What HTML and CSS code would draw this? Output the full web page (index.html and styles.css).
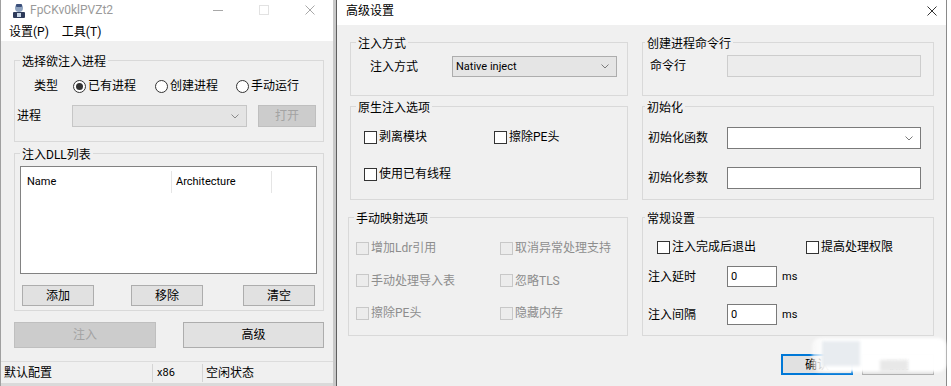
FILE: index.html
```html
<!DOCTYPE html>
<html lang="zh-CN">
<head>
<meta charset="utf-8">
<title>Injector</title>
<link rel="stylesheet" href="styles.css">
</head>
<body>
<div class="desktop">
  <div class="win-left">
    <div class="titlebar">
      <svg class="app-icon" width="14" height="15" viewBox="0 0 14 15">
        <rect x="1" y="9" width="12" height="6" rx="1" fill="#2d3a5a"/>
        <circle cx="7" cy="5" r="4" fill="#8fa3bf"/>
        <rect x="4" y="1" width="6" height="3" rx="1" fill="#3b4f7a"/>
        <rect x="5" y="10" width="4" height="4" fill="#c9d6e6"/>
      </svg>
      <span class="win-title lat12">FpCKv0klPVZt2</span>
      <div class="caption">
        <span class="cap-btn"><svg width="10" height="10" viewBox="0 0 10 10"><line x1="0" y1="5.5" x2="10" y2="5.5" stroke="#a8a8a8" stroke-width="1"/></svg></span>
        <span class="cap-btn"><svg width="10" height="10" viewBox="0 0 10 10"><rect x="0.5" y="0.5" width="9" height="9" fill="none" stroke="#e2e2e2" stroke-width="1"/></svg></span>
        <span class="cap-btn"><svg width="10" height="10" viewBox="0 0 10 10"><path d="M0.5 0.5 L9.5 9.5 M9.5 0.5 L0.5 9.5" stroke="#a8a8a8" stroke-width="1"/></svg></span>
      </div>
    </div>
    <div class="menubar">
      <span class="menu-item">设置(P)</span>
      <span class="menu-item">工具(T)</span>
    </div>
    <div class="lbody">
      <div class="grp g1">
        <span class="grp-title">选择欲注入进程</span>
        <div class="type-row">
          <span>类型</span>
          <span class="radio on r1"></span><span class="rlabel">已有进程</span>
          <span class="radio r2"></span><span class="rlabel">创建进程</span>
          <span class="radio r3"></span><span class="rlabel">手动运行</span>
        </div>
        <div class="proc-row">
          <span class="proc-label">进程</span>
          <div class="combo combo-dis proc-combo">
            <span></span>
            <svg class="chev" width="8" height="5" viewBox="0 0 8 5"><polyline points="0.5,0.5 4,4 7.5,0.5" fill="none" stroke="#8a8a8a" stroke-width="1"/></svg>
          </div>
          <span class="btn btn-dis open-btn">打开</span>
        </div>
      </div>
      <div class="grp g2">
        <span class="grp-title">注入DLL列表</span>
        <div class="list">
          <div class="list-head">
            <span class="hcol hc1 lat11">Name</span>
            <span class="hcol hc2 lat11">Architecture</span>
          </div>
        </div>
        <div class="list-btns">
          <span class="btn lbtn">添加</span>
          <span class="btn lbtn b2">移除</span>
          <span class="btn lbtn b3">清空</span>
        </div>
      </div>
      <div class="main-btns">
        <span class="btn btn-dis big-btn">注入</span>
        <span class="btn big-btn adv-btn">高级</span>
      </div>
    </div>
    <div class="statusbar">
      <span class="sb-cell sb1">默认配置</span>
      <span class="sb-cell sb2 lat11">x86</span>
      <span class="sb-cell sb3">空闲状态</span>
    </div>
    <div class="win-bottom"></div>
  </div>

  <div class="dialog">
    <div class="dlg-title">
      <span>高级设置</span>
      <svg class="dlg-close" width="10" height="10" viewBox="0 0 10 10"><path d="M0.5 0.5 L9.5 9.5 M9.5 0.5 L0.5 9.5" stroke="#333" stroke-width="1"/></svg>
    </div>
    <div class="dlg-body">
      <div class="adv-grid">
        <div class="grp f1">
          <span class="grp-title">注入方式</span>
          <div class="frow f1-row">
            <span class="flabel w82">注入方式</span>
            <div class="combo method-combo">
              <span class="lat11">Native inject</span>
              <svg class="chev" width="8" height="5" viewBox="0 0 8 5"><polyline points="0.5,0.5 4,4 7.5,0.5" fill="none" stroke="#7a7a7a" stroke-width="1"/></svg>
            </div>
          </div>
        </div>
        <div class="grp c2 f2">
          <span class="grp-title">创建进程命令行</span>
          <div class="frow f2-row">
            <span class="flabel w77">命令行</span>
            <span class="input input-dis w194"></span>
          </div>
        </div>

        <div class="grp f3">
          <span class="grp-title">原生注入选项</span>
          <div class="cbgrid cb3">
            <span class="cbitem"><span class="cb"></span><span class="cbl">剥离模块</span></span>
            <span class="cbitem"><span class="cb"></span><span class="cbl">擦除PE头</span></span>
            <span class="cbitem"><span class="cb"></span><span class="cbl">使用已有线程</span></span>
          </div>
        </div>
        <div class="grp c2 f4">
          <span class="grp-title">初始化</span>
          <div class="frow f4-row1">
            <span class="flabel w79">初始化函数</span>
            <div class="combo combo-white w194">
              <span></span>
              <svg class="chev" width="8" height="5" viewBox="0 0 8 5"><polyline points="0.5,0.5 4,4 7.5,0.5" fill="none" stroke="#7a7a7a" stroke-width="1"/></svg>
            </div>
          </div>
          <div class="frow f4-row2">
            <span class="flabel w79">初始化参数</span>
            <span class="input w194"></span>
          </div>
        </div>

        <div class="grp f5 dis">
          <span class="grp-title">手动映射选项</span>
          <div class="cbgrid cb5">
            <span class="cbitem"><span class="cb cb-dis"></span><span class="cbl">增加Ldr引用</span></span>
            <span class="cbitem"><span class="cb cb-dis"></span><span class="cbl">取消异常处理支持</span></span>
            <span class="cbitem"><span class="cb cb-dis"></span><span class="cbl">手动处理导入表</span></span>
            <span class="cbitem"><span class="cb cb-dis"></span><span class="cbl">忽略TLS</span></span>
            <span class="cbitem"><span class="cb cb-dis"></span><span class="cbl">擦除PE头</span></span>
            <span class="cbitem"><span class="cb cb-dis"></span><span class="cbl">隐藏内存</span></span>
          </div>
        </div>
        <div class="grp c2 f6">
          <span class="grp-title">常规设置</span>
          <div class="frow f6-cbrow">
            <span class="cbitem w149"><span class="cb"></span><span class="cbl">注入完成后退出</span></span>
            <span class="cbitem"><span class="cb"></span><span class="cbl">提高处理权限</span></span>
          </div>
          <div class="frow f6-row1">
            <span class="flabel w79">注入延时</span>
            <span class="input num-input lat11">0</span>
            <span class="ms lat11">ms</span>
          </div>
          <div class="frow f6-row2">
            <span class="flabel w79">注入间隔</span>
            <span class="input num-input lat11">0</span>
            <span class="ms lat11">ms</span>
          </div>
        </div>
      </div>
      <div class="dlg-btns">
        <span class="btn dbtn ok-btn">确认</span>
        <span class="btn dbtn">取消</span>
      </div>
    </div>
    <div class="watermark">
      <span class="wm-a"></span>
      <span class="wm-b"></span>
    </div>
  </div>
</div>
</body>
</html>
```

FILE: styles.css
```css
* { box-sizing: border-box; }
html, body { margin: 0; padding: 0; }
body {
  width: 951px;
  height: 386px;
  overflow: hidden;
  background: #ffffff;
  font-family: Roboto, "Noto Sans CJK SC", sans-serif;
  font-size: 12px;
  line-height: 16px;
  color: #000;
}
.lat11 { font-size: 11px; }
.lat12 { font-size: 12px; }

.desktop { display: flex; height: 386px; }

/* ---------- group boxes ---------- */
.grp {
  border: 1px solid #d9d9d9;
}
.grp-title {
  display: block;
  width: max-content;
  height: 16px;
  line-height: 16px;
  margin: -7px 0 0 5px;
  padding: 0 2px;
  background: #f0f0f0;
}
.c2 .grp-title { margin-left: 2px; }

/* ---------- left window ---------- */
.win-left {
  width: 336px;
  height: 386px;
  border-left: 1px solid #a0a0a0;
  border-right: 3px solid #c8c8c8;
  background: #f0f0f0;
  display: flex;
  flex-direction: column;
  flex: none;
}
.titlebar {
  height: 20px;
  background: #fff;
  display: flex;
  align-items: center;
  padding-left: 11px;
}
.app-icon { flex: none; }
.win-title { margin-left: 4px; color: #9a9a9a; }
.caption { margin-left: auto; display: flex; height: 20px; }
.cap-btn { width: 46px; display: flex; align-items: center; justify-content: center; }

.menubar {
  height: 21px;
  background: #fff;
  display: flex;
  align-items: center;
  padding-left: 8px;
  padding-top: 2px;
}
.menu-item { margin-right: 13px; }

.lbody {
  height: 320px;
  padding: 19px 9px 0 13px;
}

.g1 { width: 310px; height: 82px; }
.type-row {
  display: flex;
  align-items: center;
  height: 16px;
  margin-top: 8px;
  padding-left: 19px;
}
.radio {
  width: 13px;
  height: 13px;
  border: 1px solid #333;
  border-radius: 50%;
  background: #fff;
  display: inline-flex;
  align-items: center;
  justify-content: center;
  flex: none;
}
.radio.on::after {
  content: "";
  width: 7px;
  height: 7px;
  border-radius: 50%;
  background: #333;
}
.r1 { margin-left: 15px; }
.r2 { margin-left: 19px; }
.r3 { margin-left: 18px; }
.rlabel { margin-left: 2px; }

.proc-row {
  display: flex;
  align-items: center;
  margin-top: 11px;
  padding-left: 2px;
}
.proc-label { width: 24px; }
.combo {
  display: flex;
  align-items: center;
  justify-content: space-between;
  height: 22px;
  border: 1px solid #adadad;
  background: #e5e5e5;
  padding: 0 7px 0 3px;
}
.combo-dis { background: #e4e4e4; border-color: #c6c6c6; }
.combo-white { background: #fff; border-color: #7a7a7a; }
.proc-combo { margin-left: 31px; width: 175px; }
.btn {
  display: flex;
  align-items: center;
  justify-content: center;
  background: #e1e1e1;
  border: 1px solid #adadad;
  color: #000;
}
.btn-dis { background: #cccccc; border-color: #bfbfbf; color: #a3a3a3; }
.open-btn { margin-left: 11px; width: 58px; height: 22px; }

.g2 { width: 310px; height: 158px; margin-top: 11px; }
.list {
  margin: 3px 0 0 5px;
  width: 297px;
  height: 108px;
  background: #fff;
  border: 1px solid #828282;
}
.list-head { display: flex; align-items: center; height: 30px; }
.hcol {
  height: 22px;
  display: flex;
  align-items: center;
  border-right: 1px solid #e5e5e5;
}
.hc1 { width: 151px; padding-left: 6px; }
.hc2 { width: 100px; padding-left: 4px; }

.list-btns { display: flex; margin-top: 11px; padding-left: 7px; }
.lbtn { width: 72px; height: 21px; }
.b2 { margin-left: 37px; }
.b3 { margin-left: 40px; }

.main-btns { display: flex; margin-top: 11px; }
.big-btn { width: 142px; height: 26px; }
.adv-btn { margin-left: 27px; width: 141px; }

.statusbar {
  height: 22px;
  display: flex;
  align-items: center;
  border-top: 1px solid #dcdcdc;
}
.sb-cell { height: 18px; display: flex; align-items: center; }
.sb1 { width: 151px; padding-left: 3px; }
.sb2 { width: 50px; padding-left: 4px; border-left: 1px solid #d4d4d4; }
.sb3 { padding-left: 3px; border-left: 1px solid #d4d4d4; }
.win-bottom { height: 3px; background: #dadada; }

/* ---------- dialog ---------- */
.dialog {
  position: relative;
  width: 611px;
  height: 386px;
  flex: none;
  border-left: 1px solid #5e5e5e;
  border-right: 1px solid #8a8a8a;
  background: #f0f0f0;
}
.dlg-title {
  height: 25px;
  background: #fff;
  display: flex;
  align-items: center;
  padding: 0 9px 3px 9px;
}
.dlg-close { margin-left: auto; }
.dlg-body { padding: 17px 11px 0 13px; }
.adv-grid {
  display: grid;
  grid-template-columns: 278px 292px;
  column-gap: 14px;
  align-items: start;
}
.f1, .f2 { height: 54px; }
.f3, .f4 { height: 94px; margin-top: 10px; }
.f5, .f6 { height: 119px; margin-top: 17px; }
.f5 { margin-left: -2px; }

.frow { display: flex; align-items: center; }
.flabel { flex: none; }
.w82 { width: 82px; }
.w77 { width: 77px; }
.w79 { width: 79px; }
.w194 { width: 194px; }
.w149 { width: 149px; flex: none; }

.f1-row { margin-top: 4px; padding-left: 19px; }
.method-combo { width: 165px; height: 21px; }
.f2-row { margin-top: 3px; padding-left: 7px; }
.input {
  display: flex;
  align-items: center;
  height: 22px;
  background: #fff;
  border: 1px solid #7a7a7a;
  padding-left: 3px;
}
.input-dis { background: #ececec; border-color: #cdcdcd; }

.cbgrid { display: grid; }
.cb3 { grid-template-columns: 130px auto; row-gap: 19px; padding: 12px 0 0 13px; }
.cb5 { grid-template-columns: 144px auto; row-gap: 14.5px; padding: 12px 0 0 7px; }
.cbitem { display: flex; align-items: center; height: 18px; }
.cb {
  width: 13px;
  height: 13px;
  border: 1px solid #333;
  background: #fff;
  flex: none;
}
.cb-dis { border-color: #c8c8c8; background: #ececec; }
.cbl { margin-left: 2px; white-space: nowrap; }
.dis .cbl { color: #8d8d8d; }

.f4-row1 { margin-top: 11px; padding-left: 5px; }
.f4-row2 { margin-top: 18px; padding-left: 5px; }

.f6-cbrow { margin-top: 11px; padding-left: 14px; }
.f6-row1 { margin-top: 10px; padding-left: 5px; }
.f6-row2 { margin-top: 17px; padding-left: 5px; }
.num-input { width: 50px; height: 21px; }
.ms { margin-left: 5px; }

.dlg-btns {
  display: flex;
  justify-content: flex-end;
  margin-top: 18px;
  padding-right: 1px;
}
.dbtn { width: 72px; height: 21px; margin-left: 9px; }
.ok-btn { border: 2px solid #0078d7; }

.watermark {
  position: absolute;
  left: 475px;
  top: 338px;
  width: 134px;
  height: 34px;
  background: linear-gradient(to right, rgba(255, 255, 255, 0.55) 0, rgba(255, 255, 255, 0.98) 14px);
  border-radius: 8px;
  filter: blur(1.5px);
}
.wm-a {
  position: absolute;
  left: 10px;
  top: 3px;
  width: 38px;
  height: 25px;
  background: #e8ecf0;
}
.wm-b {
  position: absolute;
  left: 68px;
  top: 22px;
  width: 28px;
  height: 11px;
  background: #e8e8e8;
}
```
